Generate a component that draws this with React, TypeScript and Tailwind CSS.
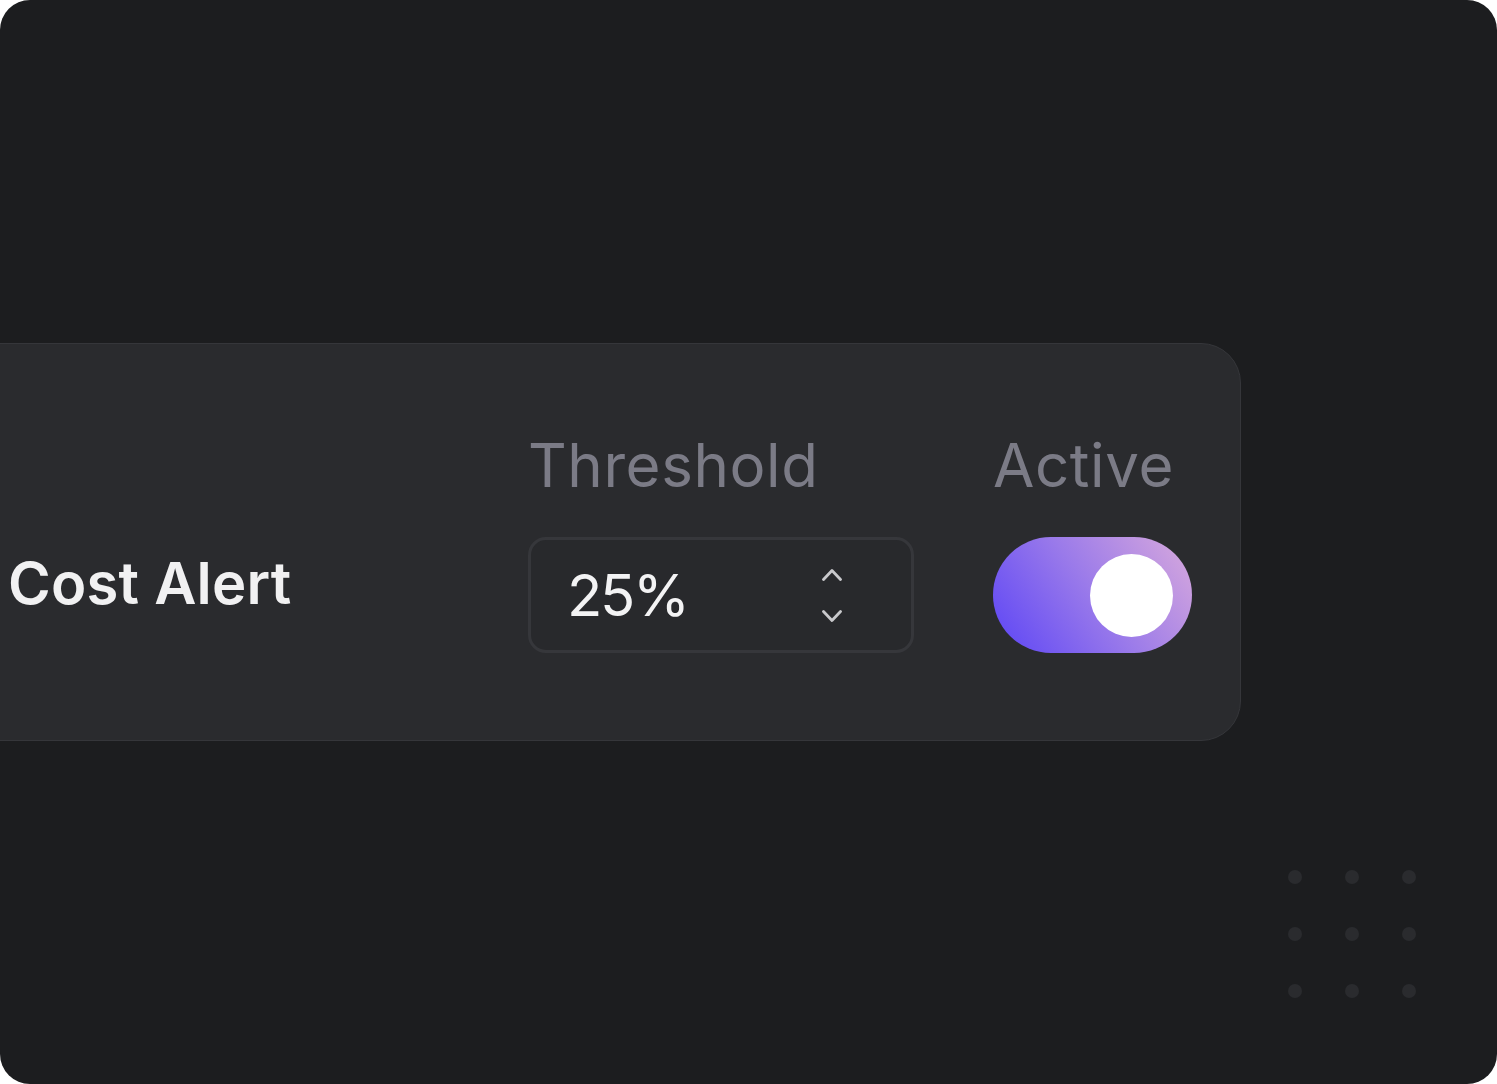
import React from "react";

function Stepper() {
  return (
    <svg width="20" height="57" viewBox="0 0 20 57" fill="none" className="text-[#c9c9cc]">
      <polyline points="1.5,12.5 10,3.5 18.5,12.5" stroke="currentColor" strokeWidth="2.8" strokeLinecap="round" strokeLinejoin="round" />
      <polyline points="1.5,44.5 10,53.5 18.5,44.5" stroke="currentColor" strokeWidth="2.8" strokeLinecap="round" strokeLinejoin="round" />
    </svg>
  );
}

function Dots() {
  return (
    <div className="absolute right-[81px] bottom-[86px] grid grid-cols-3 gap-[43px]">
      {Array.from({ length: 9 }).map((_, i) => (
        <div key={i} className="h-[14px] w-[14px] rounded-full bg-[#2a2b2e]" />
      ))}
    </div>
  );
}

export default function App() {
  return (
    <div className="h-[1084px] w-[1497px] bg-white font-['Inter','Liberation_Sans',sans-serif]">
      <div className="relative flex h-full w-full items-center overflow-hidden rounded-[30px] bg-[#1c1d1f]">
        <div className="-ml-10 flex h-[398px] w-[1281px] items-center rounded-[40px] border border-[#35363a] bg-[#2a2b2e] pl-[47px] pr-[48px]">
          <div className="mt-[82px] text-[58px] leading-none font-semibold tracking-[0.004em] text-[#f1f1f2]">Cost Alert</div>

          <div className="mt-[4px] ml-auto flex items-start gap-[79px]">
            <div className="flex flex-col gap-[42px]">
              <div className="text-[60px] leading-none tracking-[0.01em] text-[#7b7b86]">Threshold</div>
              <div className="flex h-[116px] w-[386px] items-center justify-between rounded-[18px] border-[3px] border-[#36373b] bg-[#28292c] pl-[36px] pr-[69px]">
                <span className="text-[58px] leading-none tracking-[-0.04em] text-[#f3f3f4]">25%</span>
                <Stepper />
              </div>
            </div>

            <div className="flex w-[199px] flex-col gap-[42px]">
              <div className="text-[60px] leading-none tracking-[0.01em] text-[#7b7b86]">Active</div>
              <div className="flex h-[116px] w-[199px] items-center justify-end rounded-full bg-linear-[55deg] from-[#5b44f6] via-[#9a7aea] to-[#d9aadc] pr-[19px]">
                <div className="h-[83px] w-[83px] rounded-full bg-white" />
              </div>
            </div>
          </div>
        </div>
        <Dots />
      </div>
    </div>
  );
}
